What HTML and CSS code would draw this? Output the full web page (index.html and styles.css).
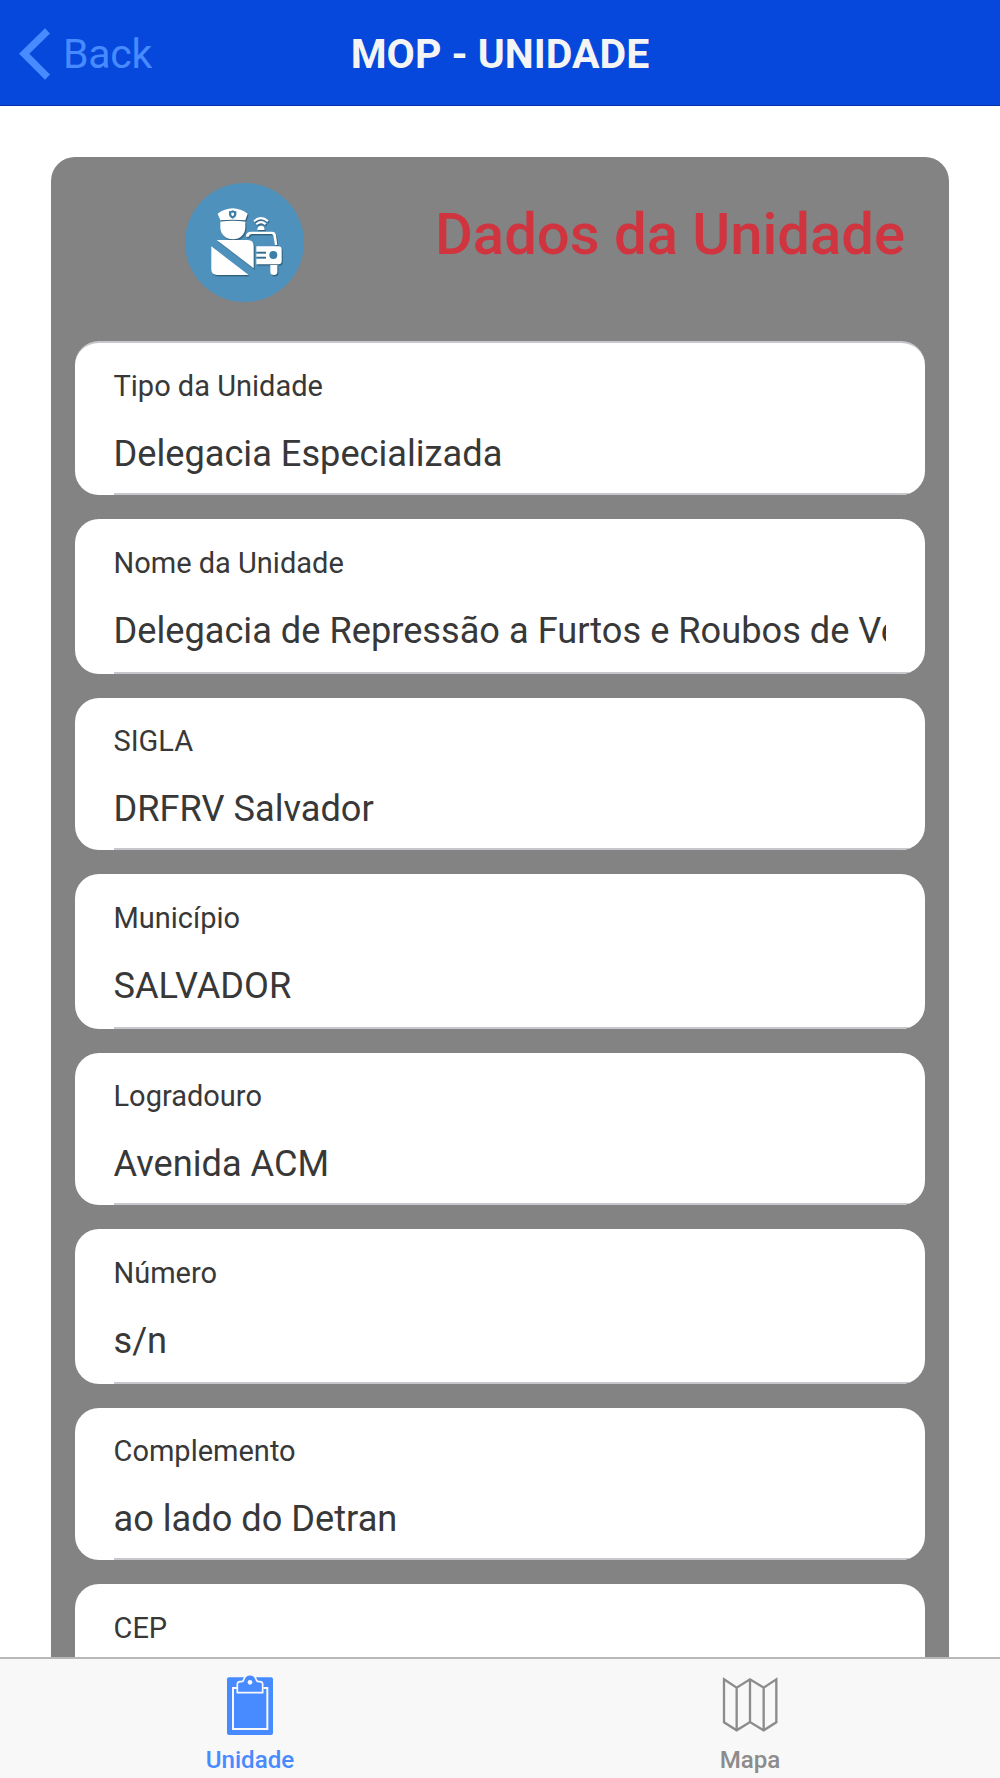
FILE: index.html
```html
<!DOCTYPE html>
<html lang="pt-BR">
<head>
    <meta charset="UTF-8">
    <title>MOP - UNIDADE</title>
    <link rel="stylesheet" href="styles.css">
</head>
<body>
    <header class="navbar">
        <a class="back">
            <svg class="back-icon" viewBox="58 84 93 155"><path d="M136 84L151 100L89 161L151 223L136 239L58 161Z"/></svg>
            <span class="back-text">Back</span>
        </a>
        <h1 class="navbar-title">MOP - UNIDADE</h1>
    </header>

    <main class="content">
        <section class="card">
            <div class="card-header">
                <svg class="logo" viewBox="46 38 357 357">
                    <circle cx="224.500" cy="216.500" r="178.500" fill="#4d91bc"/>
                    <g class="logo-figure">
                        <!-- officer -->
                        <path d="M144 130Q165 115 189 114Q213 115 234 130L227 150Q189 146 152 150Z"/>
                        <path d="M152 154Q189 149 227 154V171C227 193 210 207 190 207C169 207 152 193 152 171Z"/>
                        <path d="M141 209H234Q252 209 252 228V294Z"/>
                        <path d="M125 228L237 314H143Q125 314 125 297Z"/>
                        <!-- patrol car -->
                        <path d="M229 199Q229 184 244 184H307Q317 184 319 194L323 224H316L311 196Q310 191 305 191H246Q239 191 237 199Z"/>
                        <path d="M260 228H326Q336 228 336 238V272Q336 282 326 282H260V265H289V259H260V250H289V244H260Z"/>
                        <path d="M302 284H323V304Q323 314 313 314Q302 314 302 304Z"/>
                        <path d="M263 179Q263 166 274 166Q285 166 285 179Z"/>
                        <path class="wave" d="M253 153Q274 134 295 153M260 162Q274 149 288 162"/>
                    </g>
                    <circle cx="311" cy="254" r="12" fill="#3d7ea8"/>
                    <path d="M178 123Q184 123 189 120Q194 123 200 123V132Q200 141 189 145Q178 141 178 132Z" fill="#3d7ea8"/>
                    <path d="M185 127H193V134L189 138L185 134Z" fill="#fff"/>
                </svg>
                <h2 class="card-title">Dados da Unidade</h2>
            </div>

            <div class="list">
                <div class="item item-first">
                    <div class="item-inner">
                        <label class="item-label">Tipo da Unidade</label>
                        <div class="item-value">Delegacia Especializada</div>
                    </div>
                </div>
                <div class="item">
                    <div class="item-inner">
                        <label class="item-label">Nome da Unidade</label>
                        <div class="item-value">Delegacia de Repressão a Furtos e Roubos de Veículos</div>
                    </div>
                </div>
                <div class="item">
                    <div class="item-inner">
                        <label class="item-label">SIGLA</label>
                        <div class="item-value">DRFRV Salvador</div>
                    </div>
                </div>
                <div class="item">
                    <div class="item-inner">
                        <label class="item-label">Município</label>
                        <div class="item-value">SALVADOR</div>
                    </div>
                </div>
                <div class="item">
                    <div class="item-inner">
                        <label class="item-label">Logradouro</label>
                        <div class="item-value">Avenida ACM</div>
                    </div>
                </div>
                <div class="item">
                    <div class="item-inner">
                        <label class="item-label">Número</label>
                        <div class="item-value">s/n</div>
                    </div>
                </div>
                <div class="item">
                    <div class="item-inner">
                        <label class="item-label">Complemento</label>
                        <div class="item-value">ao lado do Detran</div>
                    </div>
                </div>
                <div class="item">
                    <div class="item-inner">
                        <label class="item-label">CEP</label>
                    </div>
                </div>
            </div>
        </section>
    </main>

    <nav class="tabs">
        <a class="tab tab-active">
            <svg class="tab-icon" viewBox="123 102 174 186">
                <path fill="currentColor" d="M147 112H273Q279 112 279 118V279Q279 285 273 285H147Q141 285 141 279V118Q141 112 147 112Z"/>
                <path fill="none" stroke="#f8f8f8" stroke-width="6" d="M171 144H159V267H262V144H250"/>
                <path fill="currentColor" stroke="#f8f8f8" stroke-width="5" d="M172 158V133Q172 125 180 125H184Q190 125 191 119Q196 104 210 104Q224 104 229 119Q230 125 236 125H240Q248 125 248 133V158Z"/>
                <circle cx="210" cy="127" r="7" fill="#f8f8f8"/>
            </svg>
            <span class="tab-text">Unidade</span>
        </a>
        <a class="tab">
            <svg class="tab-icon" viewBox="123 102 174 186">
                <path fill="none" stroke="currentColor" stroke-width="7" d="M132 118L170 143L210 118L251 143L289 118V247L251 271L210 246L170 271L132 247ZM170 143V271M210 118V246M251 143V271"/>
            </svg>
            <span class="tab-text">Mapa</span>
        </a>
    </nav>
</body>
</html>
```
FILE: styles.css
```css
* { box-sizing: border-box; }
body { display: flex; flex-direction: column; height: 1778px; margin: 0; overflow: hidden; background: #fff; color: #383838; font-family: Roboto, sans-serif; }
h1, h2 { margin: 0; }

.navbar { display: grid; grid-template-columns: 1fr auto 1fr; align-items: center; flex: none; height: 106px; padding: 2px 19px 0; background: #0648db; border-bottom: 1px solid #0433a8; }
.back { display: flex; align-items: center; gap: 13px; color: #488aff; font-size: 41px; letter-spacing: -0.3px; }
.back-icon { width: 31px; height: 52px; fill: #488aff; }
.navbar-title { color: #f4f4f4; font-size: 41px; font-weight: 700; }

.content { flex: 1; min-height: 0; padding: 51px 51px 0; overflow: hidden; }
.card { height: 1700px; padding: 0 24px; border-radius: 24px; background: #838383; }
.card-header { display: flex; height: 184px; padding: 26px 0 0 110px; }
.logo { width: 119px; height: 119px; margin-right: 131px; }
.logo-figure { fill: #fff; filter: drop-shadow(3px 4px 2px rgba(0, 0, 0, 0.35)); }
.wave { fill: none; stroke: #fff; stroke-width: 6; }
.card-title { padding-top: 17px; color: #d0343f; font-size: 58px; font-weight: 500; line-height: 68px; white-space: nowrap; }

.list { display: flex; flex-direction: column; gap: 24px; }
.item { height: 152px; padding-left: 39px; border-radius: 24px; overflow: hidden; background: #fff; }
.item:nth-child(even) { height: 155px; }
.item-first { height: 154px; border-top: 2px solid #c8c7cc; }
.item-inner { display: flex; flex-direction: column; height: 100%; padding: 25px 39px 0 0; border-bottom: 2px solid #c8c7cc; }
.item:nth-child(even) .item-inner { padding-top: 26px; }
.item-label { margin-left: -0.500px; font-size: 29px; line-height: 36px; }
.item-value { margin: 26px 0 0 -0.500px; overflow: hidden; font-size: 36.200px; line-height: 48px; white-space: nowrap; }

.tabs { display: flex; flex: none; height: 121px; background: #f8f8f8; border-top: 2px solid #b8b8b8; }
.tab { display: flex; flex: 1; flex-direction: column; align-items: center; padding-top: 15px; color: #8c8c8c; }
.tab-active { color: #488aff; }
.tab-icon { width: 58px; height: 62px; }
.tab-text { margin-top: 10px; font-size: 24.150px; font-weight: 500; line-height: 28px; }
```
